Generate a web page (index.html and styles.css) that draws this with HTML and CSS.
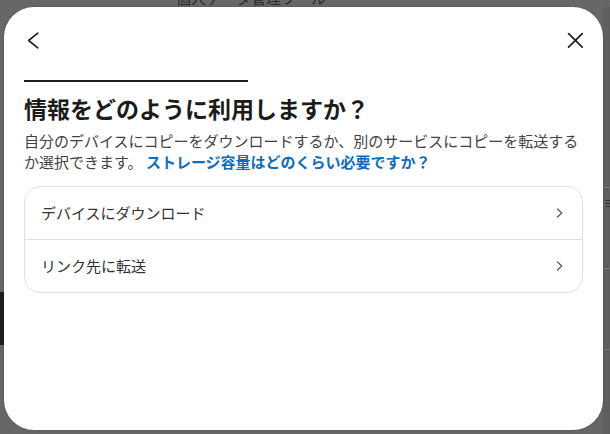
FILE: index.html
```html
<!DOCTYPE html>
<html lang="ja">
<head>
<meta charset="utf-8">
<title>情報をどのように利用しますか？</title>
<link rel="stylesheet" href="styles.css">
</head>
<body>
<div class="page">
  <div class="page-title">個人データ管理ツール</div>
  <div class="page-body">
    <div class="side-dark"></div>
    <div class="right-strip">
      <div class="strip-line l1"></div>
      <div class="strip-mark">≡</div>
      <div class="strip-line l2"></div>
      <div class="strip-line l3"></div>
    </div>
  </div>
</div>

<div class="dialog" role="dialog" aria-labelledby="dlg-title">
  <div class="dialog-header">
    <button class="icon-btn back" aria-label="戻る">
      <svg width="24" height="24" viewBox="0 0 24 24"><path d="M13.8 4.2 L4.6 11.5 L13.8 18.8" fill="none" stroke="#1f1f1f" stroke-width="1.6" stroke-linecap="round" stroke-linejoin="round"/></svg>
    </button>
    <button class="icon-btn close" aria-label="閉じる">
      <svg width="24" height="24" viewBox="0 0 24 24"><path d="M9.6 4.6 L23.2 18.2 M23.2 4.6 L9.6 18.2" fill="none" stroke="#1f1f1f" stroke-width="1.7" stroke-linecap="round"/></svg>
    </button>
  </div>
  <div class="rule"></div>
  <h1 id="dlg-title" class="title">情報をどのように利用しますか？</h1>
  <p class="desc">自分のデバイスにコピーをダウンロードするか、別のサービスにコピーを転送するか選択できます。 <a class="link" href="#">ストレージ容量はどのくらい必要ですか？</a></p>
  <div class="options">
    <div class="option">
      <span class="option-label">デバイスにダウンロード</span>
      <svg class="chev" width="16" height="16" viewBox="0 0 16 16"><path d="M5.5 4 L9.8 8 L5.5 12" fill="none" stroke="#555" stroke-width="1.2" stroke-linecap="round" stroke-linejoin="round"/></svg>
    </div>
    <div class="option">
      <span class="option-label">リンク先に転送</span>
      <svg class="chev" width="16" height="16" viewBox="0 0 16 16"><path d="M5.5 4 L9.8 8 L5.5 12" fill="none" stroke="#555" stroke-width="1.2" stroke-linecap="round" stroke-linejoin="round"/></svg>
    </div>
  </div>
</div>
</body>
</html>
```

FILE: styles.css
```css
* { box-sizing: border-box; }

html, body {
  margin: 0;
  padding: 0;
  width: 610px;
  height: 434px;
  overflow: hidden;
  background: #676767;
  font-family: "Noto Sans CJK JP", "Noto Sans", "Liberation Sans", sans-serif;
}

.page {
  position: relative;
  width: 610px;
  height: 434px;
}

.page-title {
  margin-top: -11px;
  padding-left: 176px;
  font-size: 15px;
  line-height: 18px;
  color: #2b2b2b;
}

.page-body {
  display: flex;
  justify-content: space-between;
  height: 427px;
}

.side-dark {
  width: 4px;
  height: 53px;
  margin-top: 285px;
  background: #1d1d1d;
}

.right-strip {
  width: 7px;
  display: flex;
  flex-direction: column;
  background: #5f5f5f;
}

.strip-line {
  height: 1px;
  background: #747474;
}
.strip-line.l1 { margin-top: 180px; }
.strip-line.l2 { margin-top: 58px; }
.strip-line.l3 { margin-top: 80px; }

.strip-mark {
  margin-top: 8px;
  font-size: 11px;
  line-height: 14px;
  color: #2a2a2a;
  padding-left: 1px;
}

.dialog {
  position: absolute;
  left: 4px;
  top: 7px;
  width: 599px;
  height: 423px;
  background: #ffffff;
  border-radius: 30px;
  padding: 22px 20px 20px;
  box-shadow: 0 0 2px rgba(0,0,0,0.25);
}

.dialog-header {
  display: flex;
  justify-content: space-between;
  align-items: center;
  height: 24px;
}

.icon-btn {
  width: 24px;
  height: 24px;
  padding: 0;
  margin: 0;
  border: 0;
  background: transparent;
  display: block;
}

.icon-btn svg { display: block; }

.rule {
  margin-top: 27px;
  width: 224px;
  height: 2px;
  background: #1f1f1f;
}

.title {
  margin: 11px 0 0;
  font-size: 23px;
  line-height: 30px;
  font-weight: 700;
  color: #1b1b1b;
  letter-spacing: 0;
}

.desc {
  margin: 7px 0 0;
  font-size: 15px;
  line-height: 21px;
  color: #424242;
}

.link {
  color: #0f6cbd;
  font-weight: 700;
  text-decoration: none;
}

.options {
  margin-top: 14px;
  border: 1px solid #e0e0e0;
  border-radius: 16px;
  display: flex;
  flex-direction: column;
}

.option {
  height: 52px;
  display: flex;
  align-items: center;
  justify-content: space-between;
  padding: 0 14px 0 16px;
}

.option + .option {
  border-top: 1px solid #e0e0e0;
  height: 53px;
}

.option-label {
  font-size: 15px;
  line-height: 20px;
  color: #333333;
}

.chev { display: block; }
```
